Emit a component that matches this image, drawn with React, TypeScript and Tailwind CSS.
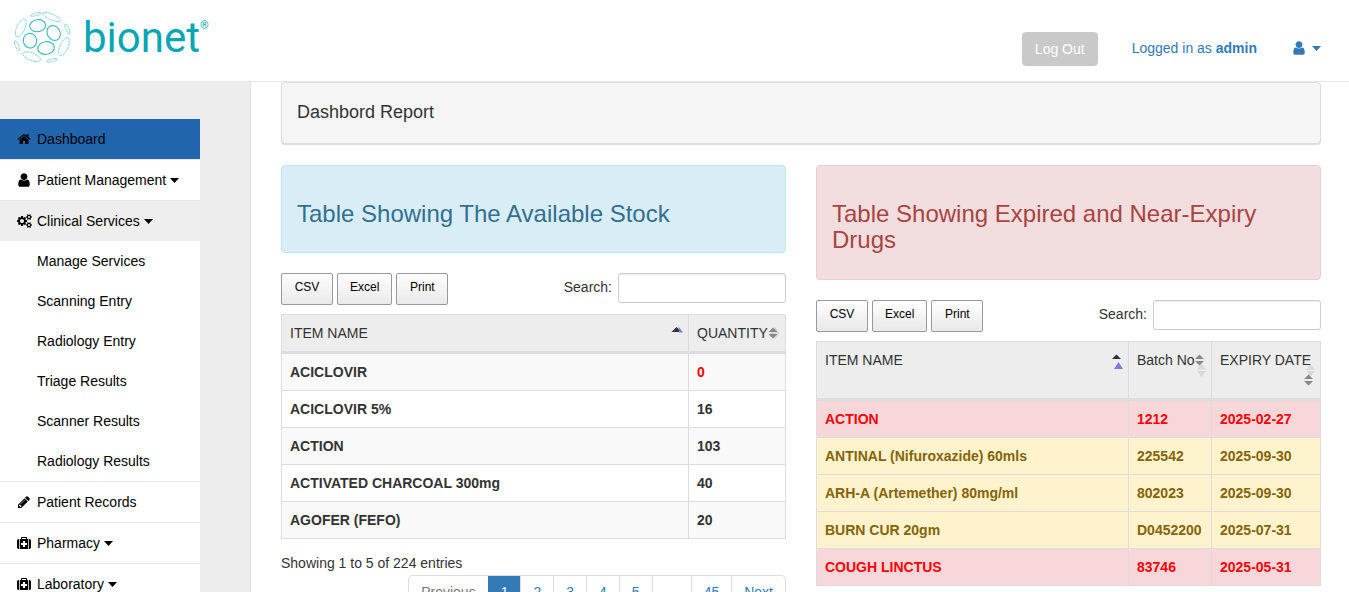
import type { ReactNode } from "react";

const PATHS = {
  home: "M1472 992v480q0 26-19 45t-45 19h-384v-384h-256v384h-384q-26 0-45-19t-19-45v-480q0-1 .5-3t.5-3l575-474 575 474q1 2 1 6zm223-69l-62 74q-8 9-21 11h-3q-13 0-21-7l-692-577-692 577q-12 8-24 7-13-2-21-11l-62-74q-8-10-7-23.5t11-21.5l719-599q32-26 76-26t76 26l244 204v-195q0-14 9-23t23-9h192q14 0 23 9t9 23v408l219 182q10 8 11 21.5t-7 23.5z",
  user: "M1536 1399q0 109-62.5 187t-150.5 78h-854q-88 0-150.5-78t-62.5-187q0-85 8.5-160.5t31.5-152 58.5-131 94-89 134.5-34.5q131 128 313 128t313-128q76 0 134.5 34.5t94 89 58.5 131 31.5 152 8.5 160.5zm-256-887q0 159-112.5 271.5t-271.5 112.5-271.5-112.5-112.5-271.5 112.5-271.5 271.5-112.5 271.5 112.5 112.5 271.5z",
  cogs: "M896 896q0-106-75-181t-181-75-181 75-75 181 75 181 181 75 181-75 75-181zm768 512q0-52-38-90t-90-38-90 38-38 90q0 53 37.5 90.5t90.5 37.5 90.5-37.5 37.5-90.5zm0-1024q0-52-38-90t-90-38-90 38-38 90q0 53 37.5 90.5t90.5 37.5 90.5-37.5 37.5-90.5zm-384 421v185q0 10-7 19.5t-16 10.5l-155 24q-11 35-32 76 34 48 90 115 7 11 7 20 0 12-7 19-23 30-82.5 89.5t-78.5 59.5q-11 0-21-7l-115-90q-37 19-77 31-11 108-23 155-7 24-30 24h-186q-11 0-20-7.5t-10-17.5l-23-153q-34-10-75-31l-118 89q-7 7-20 7-11 0-21-8-144-133-144-160 0-9 7-19 10-14 41-53t47-61q-23-44-35-82l-152-24q-10-1-17-9.5t-7-19.5v-185q0-10 7-19.5t16-10.5l155-24q11-35 32-76-34-48-90-115-7-11-7-20 0-12 7-20 22-30 82-89t79-59q11 0 21 7l115 90q34-18 77-32 11-108 23-154 7-24 30-24h186q11 0 20 7.5t10 17.5l23 153q34 10 75 31l118-89q8-7 20-7 11 0 21 8 144 133 144 160 0 8-7 19-12 16-42 54t-45 60q23 48 34 82l152 23q10 2 17 10.5t7 19.5zm640 533v140q0 16-149 31-12 27-30 52 51 113 51 138 0 4-4 7-122 71-124 71-8 0-46-47t-52-68q-20 2-30 2t-30-2q-14 21-52 68t-46 47q-2 0-124-71-4-3-4-7 0-25 51-138-18-25-30-52-149-15-149-31v-140q0-16 149-31 13-29 30-52-51-113-51-138 0-4 4-7 4-2 35-20t59-34 30-16q8 0 46 46.5t52 67.5q20-2 30-2t30 2q51-71 92-112l6-2q4 0 124 70 4 3 4 7 0 25-51 138 17 23 30 52 149 15 149 31zm0-1024v140q0 16-149 31-12 27-30 52 51 113 51 138 0 4-4 7-122 71-124 71-8 0-46-47t-52-68q-20 2-30 2t-30-2q-14 21-52 68t-46 47q-2 0-124-71-4-3-4-7 0-25 51-138-18-25-30-52-149-15-149-31v-140q0-16 149-31 13-29 30-52-51-113-51-138 0-4 4-7 4-2 35-20t59-34 30-16q8 0 46 46.5t52 67.5q20-2 30-2t30 2q51-71 92-112l6-2q4 0 124 70 4 3 4 7 0 25-51 138 17 23 30 52 149 15 149 31z",
  pencil: "M491 1536l91-91-235-235-91 91v107h128v128h107zm523-928q0-22-22-22-10 0-17 7l-542 542q-7 7-7 17 0 22 22 22 10 0 17-7l542-542q7-7 7-17zm-54-192l416 416-832 832h-416v-416zm683 96q0 53-37 90l-166 166-416-416 166-165q36-38 90-38 53 0 91 38l235 234q37 39 37 91z",
  medkit: "M1280 1120v-192q0-14-9-23t-23-9h-224v-224q0-14-9-23t-23-9h-192q-14 0-23 9t-9 23v224h-224q-14 0-23 9t-9 23v192q0 14 9 23t23 9h224v224q0 14 9 23t23 9h192q14 0 23-9t9-23v-224h224q14 0 23-9t9-23zm-640-736h512v-128h-512v128zm-384 0v1280h-32q-92 0-158-66t-66-158v-832q0-92 66-158t158-66h32zm1184 0v1280h-1088v-1280h160v-160q0-40 28-68t68-28h576q40 0 68 28t28 68v160h160zm352 224v832q0 92-66 158t-158 66h-32v-1280h32q92 0 158 66t66 158z",
};

const SIZES = {
  home: "size-3.5",
  user: "size-4",
  cogs: "h-3.5 w-[15px]",
  pencil: "size-3.5",
  medkit: "size-3.5",
};

type IconName = keyof typeof PATHS;

function Icon({ name }: { name: IconName }) {
  return (
    <svg
      viewBox={name === "cogs" ? "0 0 1920 1792" : "0 0 1792 1792"}
      className={SIZES[name]}
      fill="currentColor"
      aria-hidden="true"
    >
      <path d={PATHS[name]} />
    </svg>
  );
}

function Caret() {
  return (
    <svg viewBox="0 0 9 5" className="h-[5px] w-[9px]" fill="currentColor" aria-hidden="true">
      <path d="M0 0h9L4.5 5z" />
    </svg>
  );
}

// cx, cy, rx, ry, rotation
const GLOBE = [
  [83, 62, 24, 18, -8], [131, 84, 19, 23, -30], [60, 107, 20, 22, -12], [108, 129, 25, 19, -8],
];
const GLOBE_EDGE = [
  [32, 69, 12, 29, 24], [125, 36, 28, 9, 23], [162, 125, 12, 29, 24], [65, 155, 28, 11, 22],
  [78, 28, 17, 4, -14], [172, 72, 5, 16, -22], [21, 122, 5, 16, -22], [126, 166, 17, 4, -14],
];

function Logo() {
  return (
    <a href="#" className="flex items-start pl-[10px] text-[#08a6b5]" aria-label="bionet">
      <svg viewBox="0 0 195 195" className="mt-[5px] size-[65px]" fill="none" stroke="#3bb9c2" aria-hidden="true">
        {GLOBE.map(([cx, cy, rx, ry, r]) => (
          <ellipse key={cx} cx={cx} cy={cy} rx={rx} ry={ry} transform={`rotate(${r} ${cx} ${cy})`} strokeWidth="3.4" />
        ))}
        {GLOBE_EDGE.map(([cx, cy, rx, ry, r]) => (
          <ellipse
            key={cx}
            cx={cx}
            cy={cy}
            rx={rx}
            ry={ry}
            transform={`rotate(${r} ${cx} ${cy})`}
            strokeWidth="2.6"
            strokeDasharray="7 1.5"
            opacity="0.65"
          />
        ))}
      </svg>
      <span className="mt-[13px] ml-2 font-[Roboto,sans-serif] text-[42px] leading-[50px]">bionet</span>
      <span className="mt-[18px] font-[Roboto,sans-serif] text-[11px] leading-4">®</span>
    </a>
  );
}

function MenuItem({ icon, label, caret, className }: { icon: IconName; label: string; caret?: boolean; className: string }) {
  return (
    <a href="#" className={`flex h-10 items-center gap-1 pl-[15px] ${className}`}>
      <span className="flex w-[18px] justify-center">
        <Icon name={icon} />
      </span>
      {label}
      {caret && <Caret />}
    </a>
  );
}

const SERVICES = ["Manage Services", "Scanning Entry", "Radiology Entry", "Triage Results", "Scanner Results", "Radiology Results"];

function Sidebar() {
  return (
    <nav className="w-[251px] shrink-0 border-r border-[#e0e0e0] bg-[#ededed] pt-[37px] text-black">
      <ul className="w-[200px] *:border-b *:border-[#e7e7e7]">
        <li><MenuItem icon="home" label="Dashboard" className="bg-[#2166ac]" /></li>
        <li><MenuItem icon="user" label="Patient Management" caret className="bg-white" /></li>
        <li>
          <MenuItem icon="cogs" label="Clinical Services" caret className="bg-[#eeeeee]" />
          <ul className="bg-white">
            {SERVICES.map((s) => (
              <li key={s}>
                <a href="#" className="flex h-10 items-center pl-[37px]">{s}</a>
              </li>
            ))}
          </ul>
        </li>
        <li><MenuItem icon="pencil" label="Patient Records" className="bg-white" /></li>
        <li><MenuItem icon="medkit" label="Pharmacy" caret className="bg-white" /></li>
        <li><MenuItem icon="medkit" label="Laboratory" caret className="bg-white" /></li>
      </ul>
    </nav>
  );
}

function SortMark({ children }: { children: ReactNode }) {
  return (
    <svg viewBox="0 0 20 36" className="absolute top-2 right-0 h-9 w-5" aria-hidden="true">
      {children}
    </svg>
  );
}

function Toolbar({ id }: { id: string }) {
  return (
    <div className="flex items-start justify-between">
      <div className="flex gap-1">
        {["CSV", "Excel", "Print"].map((b) => (
          <button
            key={b}
            type="button"
            className="h-8 rounded-[2px] border border-[#999] bg-linear-to-b from-white to-[#e9e9e9] px-3 pb-1 text-[12px] leading-5 text-black min-w-[52px]"
          >
            {b}
          </button>
        ))}
      </div>
      <div className="flex items-center gap-1.5">
        <label htmlFor={id} className="pb-0.5">Search:</label>
        <input id={id} type="search" className="h-[30px] w-[168px] rounded-[3px] border border-[#ccc] bg-white px-2.5 shadow-[inset_0_1px_1px_rgba(0,0,0,0.075)]" />
      </div>
    </div>
  );
}

const TABLE = "mt-[9px] w-full table-fixed border-separate border-spacing-0 border-t border-l border-[#ddd] text-left";
const TH = "relative border-r border-b-3 border-[#ddd] bg-[#ededed] p-2 align-top font-normal whitespace-nowrap";
const TD = "border-r border-b border-[#ddd] p-2 whitespace-nowrap";

const STOCK = [
  ["ACICLOVIR", "0"],
  ["ACICLOVIR 5%", "16"],
  ["ACTION", "103"],
  ["ACTIVATED CHARCOAL 300mg", "40"],
  ["AGOFER (FEFO)", "20"],
];

const DRUGS = [
  { item: "ACTION", batch: "1212", date: "2025-02-27", expired: true },
  { item: "ANTINAL (Nifuroxazide) 60mls", batch: "225542", date: "2025-09-30", expired: false },
  { item: "ARH-A (Artemether) 80mg/ml", batch: "802023", date: "2025-09-30", expired: false },
  { item: "BURN CUR 20gm", batch: "D0452200", date: "2025-07-31", expired: false },
  { item: "COUGH LINCTUS", batch: "83746", date: "2025-05-31", expired: true },
];

function Pagination() {
  return (
    <div className="mt-0.5 flex justify-end">
      <div className="flex overflow-hidden rounded border border-[#ddd] text-[#337ab7]">
        <button type="button" disabled className="px-3 py-1.5 text-[#777]">Previous</button>
        <button type="button" className="border-l border-[#337ab7] bg-[#337ab7] px-3 py-1.5 text-white">1</button>
        {["2", "3", "4", "5", "…", "45", "Next"].map((p) => (
          <button key={p} type="button" className="border-l border-[#ddd] px-3 py-1.5">{p}</button>
        ))}
      </div>
    </div>
  );
}

export default function App() {
  return (
    <div className="flex h-screen flex-col overflow-hidden bg-white font-['Liberation_Sans',Arial,sans-serif] text-[14px] leading-5 text-[#333]">
      <header className="flex h-[82px] shrink-0 items-start justify-between border-b border-[#e7e7e7]">
        <Logo />
        <div className="flex items-center pt-8 pr-7 text-[#337ab7]">
          <button type="button" className="rounded bg-[#c9c9c9] px-[13px] py-[7px] text-white">Log Out</button>
          <a href="#" className="ml-[34px] pb-0.5">Logged in as <b>admin</b></a>
          <button type="button" aria-label="User menu" className="ml-[34px] flex items-center gap-[5px] pb-0.5">
            <Icon name="user" />
            <Caret />
          </button>
        </div>
      </header>

      <div className="flex min-h-0 flex-1">
        <Sidebar />
        <main className="min-w-0 flex-1 pr-7 pl-[30px]">
          <h1 className="rounded border border-[#ddd] bg-[#f5f5f5] px-[15px] pt-[19px] pb-[21px] text-[18px] leading-5 shadow-[0_1px_1px_rgba(0,0,0,0.15)]">
            Dashbord Report
          </h1>

          <div className="mt-[21px] grid grid-cols-2 items-start gap-[30px]">
            <section>
              <h2 className="mb-5 rounded border border-[#bce8f1] bg-[#d9edf7] px-[15px] pt-[35px] pb-[25px] text-[24px] leading-[26px] text-[#31708f]">
                Table Showing The Available Stock
              </h2>
              <Toolbar id="stock-search" />
              <table className={TABLE}>
                <thead>
                  <tr>
                    <th className={TH}>
                      ITEM NAME
                      <SortMark>
                        <path d="M8.5 4l5 5h-10z" fill="#333" />
                        <path d="M10.5 3.5L15 9.5h-4z" fill="#7b7be0" />
                      </SortMark>
                    </th>
                    <th className={`${TH} w-[97px]`}>
                      QUANTITY
                      <SortMark>
                        <path d="M10 4l5 6-5 6-5-6z" fill="#d9d9d9" />
                        <path d="M8 4.5L12.5 9h-9zM3.5 11h9L8 15.5z" fill="#888" />
                      </SortMark>
                    </th>
                  </tr>
                </thead>
                <tbody className="font-bold">
                  {STOCK.map(([item, qty]) => (
                    <tr key={item} className="odd:bg-[#f9f9f9]">
                      <td className={TD}>{item}</td>
                      <td className={`${TD} ${qty === "0" ? "text-[#ff0000]" : ""}`}>{qty}</td>
                    </tr>
                  ))}
                </tbody>
              </table>
              <p className="mt-3.5">Showing 1 to 5 of 224 entries</p>
              <Pagination />
            </section>

            <section>
              <h2 className="mb-5 rounded border border-[#ebccd1] bg-[#f2dede] px-[15px] pt-[35px] pb-[26px] text-[24px] leading-[26px] text-[#a94442]">
                Table Showing Expired and Near-Expiry Drugs
              </h2>
              <Toolbar id="expiry-search" />
              <table className={TABLE}>
                <thead>
                  <tr className="h-[59px]">
                    <th className={TH}>
                      ITEM NAME
                      <SortMark>
                        <path d="M8.5 4.5L13 9H4z" fill="#333" />
                        <path d="M10.5 12l4.5 7H6z" fill="#7b7be0" />
                      </SortMark>
                    </th>
                    <th className={`${TH} w-[83px]`}>
                      Batch No
                      <SortMark>
                        <path d="M10.5 13.5l4.5 6H6zM6 21h9l-4.5 6z" fill="#d9d9d9" />
                        <path d="M8.5 4.5L13 9H4zM4 11h9l-4.5 4.5z" fill="#888" />
                      </SortMark>
                    </th>
                    <th className={`${TH} w-[109px]`}>
                      EXPIRY DATE
                      <SortMark>
                        <path d="M10.5 14l4.5 6H6zM6 21h9l-4.5 6z" fill="#d9d9d9" />
                        <path d="M8.5 24.5L13 29H4zM4 31h9l-4.5 4.5z" fill="#888" />
                      </SortMark>
                    </th>
                  </tr>
                </thead>
                <tbody className="font-bold">
                  {DRUGS.map((d) => (
                    <tr key={d.item} className={d.expired ? "bg-[#f8d7da] text-[#ff0000]" : "bg-[#fff3cd] text-[#856404]"}>
                      <td className={TD}>{d.item}</td>
                      <td className={TD}>{d.batch}</td>
                      <td className={TD}>{d.date}</td>
                    </tr>
                  ))}
                </tbody>
              </table>
            </section>
          </div>
        </main>
      </div>
    </div>
  );
}
